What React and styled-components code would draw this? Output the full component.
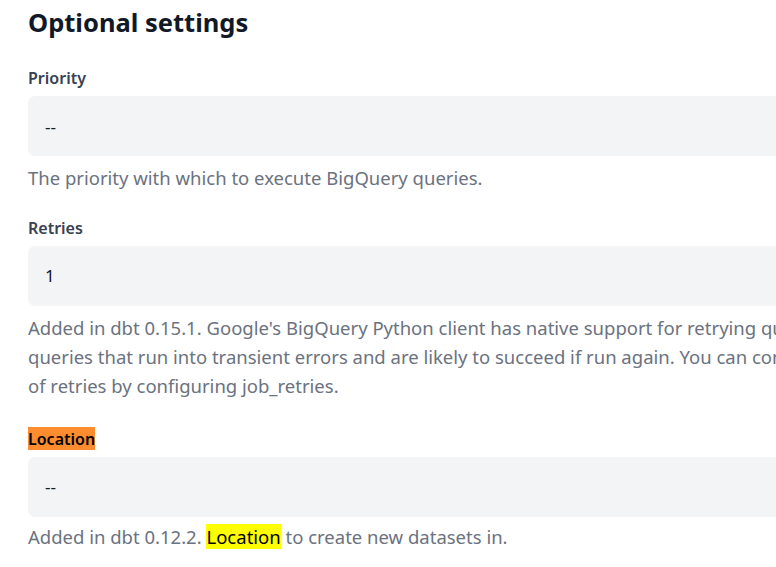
import React from "react";
import styled, { createGlobalStyle } from "styled-components";

const Global = createGlobalStyle`
  html, body { margin: 0; padding: 0; background: #fff; overflow: hidden; }
  body { font-family: "Noto Sans", "Open Sans", sans-serif; }
`;

const Page = styled.div`
  width: 1200px;
  padding: 4px 0 0 28px;
  box-sizing: border-box;
`;

const Title = styled.h2`
  margin: 0 0 27px;
  font-size: 25.5px;
  line-height: 36px;
  font-weight: 700;
  color: #111827;
`;

const Field = styled.div`
  display: flex;
  flex-direction: column;
  margin-bottom: ${(p) => p.$gap || "24.5px"};
`;

const Label = styled.label`
  align-self: flex-start;
  font-size: 16px;
  line-height: 22px;
  font-weight: 600;
  color: ${(p) => (p.$hl ? "#000" : "#374151")};
  background: ${(p) => (p.$hl ? "#ff8c2e" : "transparent")};
  padding: ${(p) => (p.$hl ? "1px 0 0" : "0")};
  margin-bottom: 7px;
`;

const Box = styled.div`
  height: 60px;
  border-radius: 7px;
  background: #f3f4f6;
  display: flex;
  align-items: center;
  padding: 0 17px;
  font-size: 17px;
  color: #111827;
`;

const Help = styled.p`
  margin: ${(p) => p.$top || "7px"} 0 0;
  font-size: 18.5px;
  line-height: 29px;
  color: #6b7280;
  white-space: nowrap;
`;

const Mark = styled.mark`
  background: #ffff00;
  color: #000;
`;

export default function App() {
  return (
    <Page>
      <Global />
      <Title>Optional settings</Title>
      <Field>
        <Label>Priority</Label>
        <Box>--</Box>
        <Help>The priority with which to execute BigQuery queries.</Help>
      </Field>
      <Field $gap="27px">
        <Label>Retries</Label>
        <Box>1</Box>
        <Help>
          Added in dbt 0.15.1. Google's BigQuery Python client has native support for retrying queries. dbt will retry
          <br />
          queries that run into transient errors and are likely to succeed if run again. You can configure the maximum number
          <br />
          of retries by configuring job_retries.
        </Help>
      </Field>
      <Field>
        <Label $hl>Location</Label>
        <Box>--</Box>
        <Help $top="5px">
          Added in dbt 0.12.2. <Mark>Location</Mark> to create new datasets in.
        </Help>
      </Field>
    </Page>
  );
}
